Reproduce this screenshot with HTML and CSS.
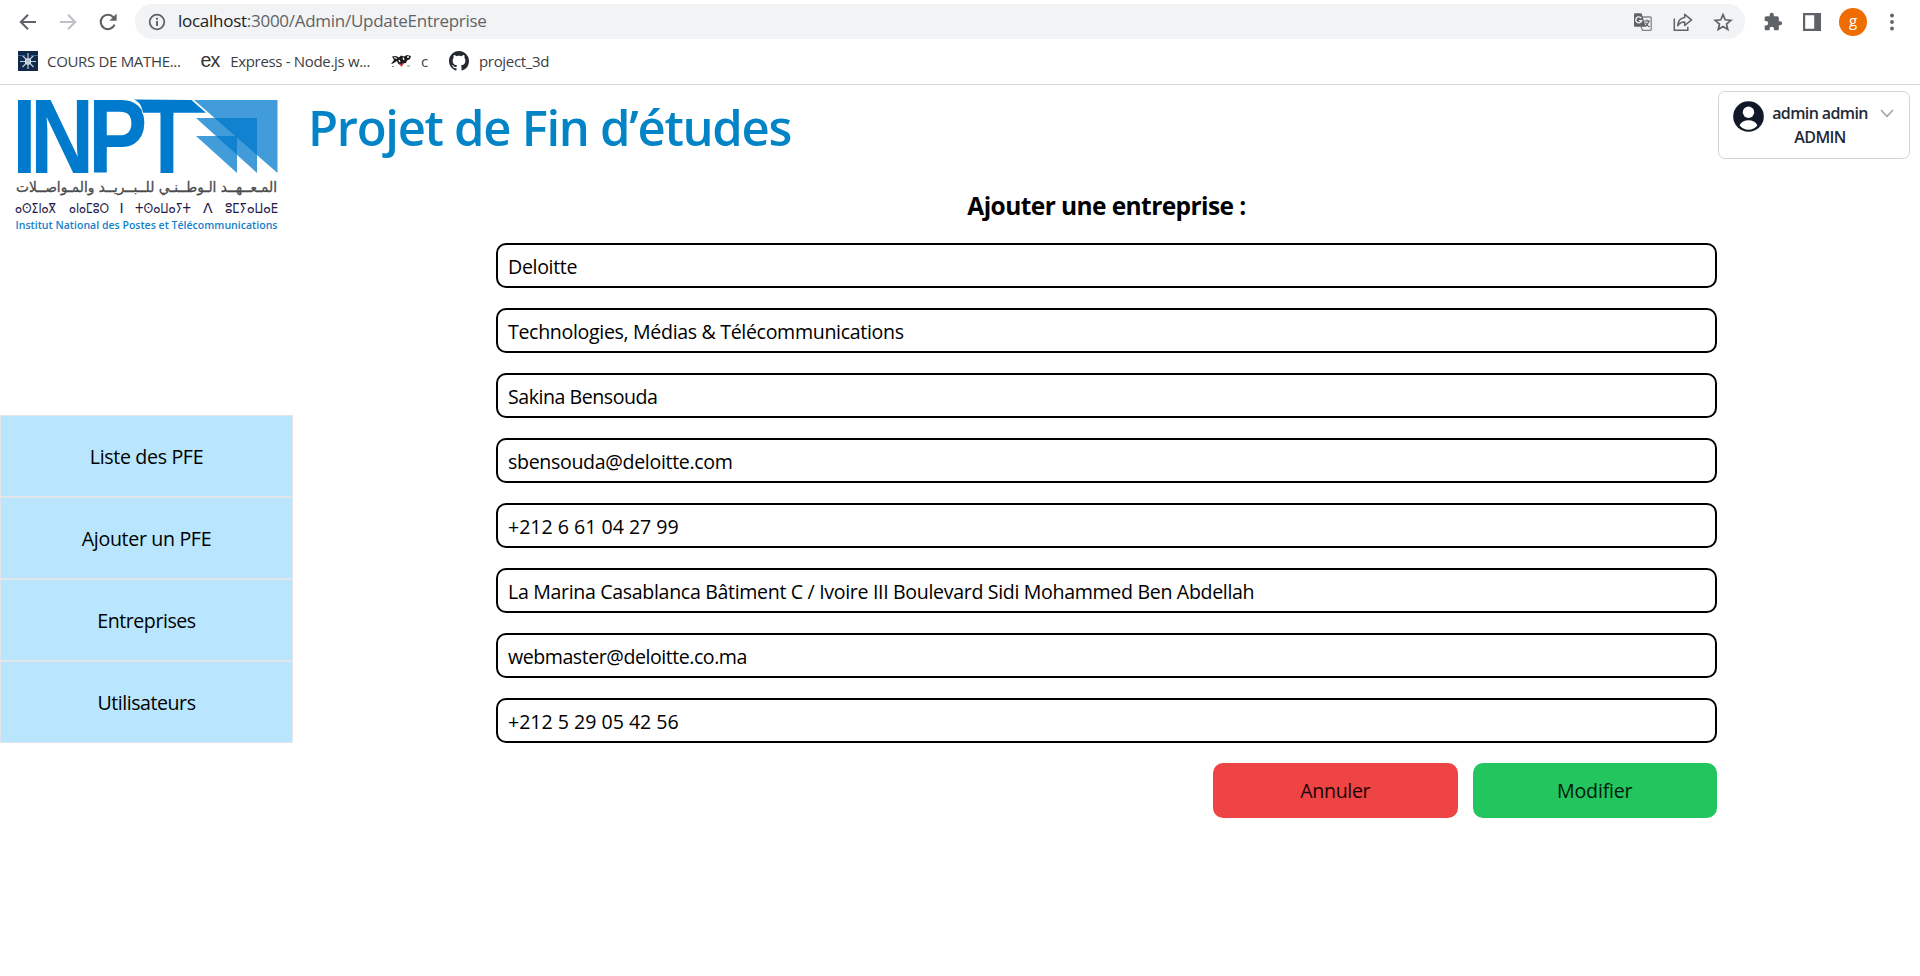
FILE: index.html
```html
<!DOCTYPE html>
<html lang="fr">
<head>
<meta charset="utf-8">
<title>Projet de Fin d’études</title>
<link rel="stylesheet" href="styles.css">
</head>
<body>
<header class="browser">
  <div class="toolbar">
    <svg class="tool back" width="20" height="20" viewBox="0 0 20 20"><path d="M18 10H3M10 2.7L2.800 10l7.200 7.300" fill="none" stroke="#5f6368" stroke-width="2"/></svg>
    <svg class="tool forward" width="20" height="20" viewBox="0 0 20 20"><path d="M2 10h15M10 2.700l7.200 7.300-7.200 7.300" fill="none" stroke="#bdc0c4" stroke-width="2"/></svg>
    <svg class="tool reload" width="20" height="20" viewBox="0 0 20 20"><path d="M16.600 12.600A7.200 7.200 0 1 1 15.400 5.200" fill="none" stroke="#5f6368" stroke-width="2.100"/><path d="M18.600 1.600v7.200h-7.200z" fill="#5f6368"/></svg>
    <div class="omnibox">
      <svg width="18" height="18" viewBox="0 0 18 18"><circle cx="9" cy="9" r="7.300" fill="none" stroke="#5f6368" stroke-width="1.800"/><path d="M9 8v5M9 4.800v2" stroke="#5f6368" stroke-width="2"/></svg>
      <span class="url"><span class="host">localhost</span>:3000/Admin/UpdateEntreprise</span>
      <div class="actions">
        <svg width="20" height="20" viewBox="0 0 20 20"><path d="M8 5h9.200q1 0 1 1v11.400q0 1-1 1H9.500L8 14.500" fill="none" stroke="#80848a" stroke-width="1.300"/><path d="M2.200 1.200h6.300l4.300 13.600H2.200q-1.200 0-1.200-1.200V2.400q0-1.200 1.200-1.200z" fill="#5f6368"/><path d="M8.300 6.200A3 3 0 1 0 8.700 8.600H6" fill="none" stroke="#f1f3f4" stroke-width="1.400"/><path d="M11 9h6M14 7.500V9M16 9q-1 3.500-4 5.500M12.500 10.500q1.500 3 4 4.500" fill="none" stroke="#5f6368" stroke-width="1.200"/></svg>
        <svg width="20" height="20" viewBox="0 0 20 20"><path d="M1.300 6.500v11.700h13.500v-3.500" fill="none" stroke="#5f6368" stroke-width="1.500"/><path d="M11.700 2.300l6.800 5.600-6.800 5.600v-3.400c-3.200 0-5.400 1.100-7 3.700.3-4.600 2.600-7.600 7-8.200z" fill="none" stroke="#5f6368" stroke-width="1.500" stroke-linejoin="round"/></svg>
        <svg width="20" height="20" viewBox="0 0 20 20"><path d="M10 2.600l2.200 5.200 5.600.5-4.300 3.700 1.300 5.500-4.800-2.900-4.800 2.900 1.300-5.500-4.300-3.700 5.600-.5z" fill="none" stroke="#5f6368" stroke-width="1.700"/></svg>
      </div>
    </div>
    <div class="extras">
      <svg width="20" height="20" viewBox="0 0 24 24"><path fill="#5f6368" d="M20.500 11H19V7c0-1.100-.9-2-2-2h-4V3.500a2.500 2.500 0 0 0-5 0V5H4c-1.100 0-2 .9-2 2v3.800h1.500a2.700 2.700 0 0 1 0 5.400H2V20c0 1.100.9 2 2 2h3.800v-1.500a2.700 2.700 0 0 1 5.400 0V22H17c1.100 0 2-.9 2-2v-4h1.500a2.500 2.500 0 0 0 0-5z"/></svg>
      <svg width="18" height="18" viewBox="0 0 18 18"><path fill="#5f6368" fill-rule="evenodd" d="M0 0h18v18H0zM2.200 2.200v13.600h9V2.200z"/></svg>
      <span class="account">g</span>
      <svg width="6" height="18" viewBox="0 0 6 18"><g fill="#5f6368"><circle cx="3" cy="2.500" r="1.900"/><circle cx="3" cy="9" r="1.900"/><circle cx="3" cy="15.500" r="1.900"/></g></svg>
    </div>
  </div>
  <nav class="bookmarks">
    <a class="bookmark"><svg width="20" height="20" viewBox="0 0 20 20"><path fill="#10294a" d="M0 0h20v20H0z"/><path d="M10 2v16M2 10.500h16M4.500 4.500l11 11.500M15.500 4.500l-11 11.500" stroke="#b9cbdc" stroke-width="1.200"/><circle cx="10" cy="10.500" r="2.600" fill="none" stroke="#dfe8f0" stroke-width="1.100"/><path d="M0 4.500h7M13 4.500h7" stroke="#3f6a92" stroke-width="1"/></svg><span>COURS DE MATHE...</span></a>
    <a class="bookmark express"><span class="ex">ex</span><span>Express - Node.js w...</span></a>
    <a class="bookmark cbook"><svg width="21" height="14" viewBox="0 0 21 14"><path d="M1 2.500l4-.5 3 1.500 2-2 3 1 3-1.500 4 1-1 3-3 1.500-1 2.500-3 .5-2 2-3-2-1-2.500-4 2.500-2 .5 3-4z" fill="#1b1b1b"/><path d="M3 3.500l3 1M12 3.500l1 2.500M16 3h2M8 6l1 2" stroke="#fff" stroke-width="1.300"/><path d="M8.500 9.500l2 2.500 2-3" stroke="#d64550" stroke-width="1.200" fill="none"/><path d="M1 12.500h2M16 12h3" stroke="#888"/></svg><span>c</span></a>
    <a class="bookmark github"><svg width="20" height="20" viewBox="0 0 16 16"><path fill="#24292f" d="M8 0C3.580 0 0 3.580 0 8c0 3.540 2.290 6.530 5.470 7.590.4.070.55-.17.55-.38 0-.19-.01-.82-.01-1.490-2.010.37-2.530-.49-2.690-.94-.09-.23-.48-.94-.82-1.130-.28-.15-.68-.52-.01-.53.63-.01 1.080.58 1.230.82.72 1.210 1.870.87 2.330.66.07-.52.28-.87.51-1.070-1.780-.2-3.640-.89-3.640-3.950 0-.87.31-1.590.82-2.150-.08-.2-.36-1.020.08-2.120 0 0 .67-.21 2.200.82.64-.18 1.320-.27 2-.27s1.360.09 2 .27c1.530-1.040 2.200-.82 2.200-.82.44 1.100.16 1.920.08 2.120.51.56.82 1.270.82 2.150 0 3.070-1.870 3.750-3.650 3.950.29.25.54.73.54 1.480 0 1.070-.01 1.930-.01 2.200 0 .21.15.46.55.38A8.010 8.010 0 0 0 16 8c0-4.420-3.580-8-8-8z"/></svg><span>project_3d</span></a>
  </nav>
</header>

<div class="page">
  <aside class="sidebar">
    <svg class="logo" width="293" height="155" viewBox="0 0 293 155">
      <text class="logo-name" x="14.300 35.700 104.800 166.400" y="88" transform="scale(.84 1)">INPT</text>
      <path d="M134 14.500C139.500 17 142 21 143 27.700H206L191.400 15z" fill="#007acc" stroke="#fff" stroke-width="1.600" paint-order="stroke"/>
      <path d="M160.600 26h12.800v4h-12.800z" fill="#007acc"/>
      <g fill="#007acc" fill-opacity=".74">
        <path d="M194 15h83.500v73z"/>
        <path d="M196 33h61v55z"/>
        <path d="M196 51h41v37z"/>
      </g>
      <text class="logo-arabic" x="146.500" y="107" textLength="261" lengthAdjust="spacingAndGlyphs">المـعــهــد الـوطــنـي للــبــريــد والمـواصــلات</text>
      <g class="logo-tifinagh">
        <text x="15" y="128" textLength="41" lengthAdjust="spacingAndGlyphs">ⴰⵙⵉⵏⴰⴳ</text>
        <text x="69" y="128" textLength="40" lengthAdjust="spacingAndGlyphs">ⴰⵏⴰⵎⵓⵔ</text>
        <text x="119.500" y="128">ⵏ</text>
        <text x="135" y="128" textLength="56" lengthAdjust="spacingAndGlyphs">ⵜⵙⴰⵡⴰⵢⵜ</text>
        <text x="203" y="128">ⴷ</text>
        <text x="225" y="128" textLength="53" lengthAdjust="spacingAndGlyphs">ⵓⵎⵢⴰⵡⴰⴹ</text>
      </g>
      <text class="logo-caption" x="15.500" y="144" textLength="262" lengthAdjust="spacingAndGlyphs">Institut National des Postes et Télécommunications</text>
    </svg>
    <nav class="menu">
      <a class="menu-item">Liste des PFE</a>
      <a class="menu-item">Ajouter un PFE</a>
      <a class="menu-item tight">Entreprises</a>
      <a class="menu-item tight">Utilisateurs</a>
    </nav>
  </aside>
  <main class="content">
    <div class="topbar">
      <h1 class="title">Projet de Fin d’études</h1>
      <div class="profile">
        <svg class="avatar" width="31" height="31" viewBox="0 0 31 31"><circle cx="15.500" cy="15.500" r="15.300" fill="#111827"/><circle cx="15.500" cy="11.300" r="5.700" fill="#fff"/><path d="M6.600 24.300c1.500-3.300 5-5 8.900-5s7.400 1.700 8.900 5c-2 2.900-5.200 4.500-8.900 4.500s-6.900-1.600-8.900-4.500z" fill="#fff"/></svg>
        <div class="identity"><span>admin admin</span><span class="role">ADMIN</span></div>
        <svg class="chevron" width="14" height="9" viewBox="0 0 14 9"><path d="M1 1l6 6.300L13 1" fill="none" stroke="#9ca3af" stroke-width="1.500"/></svg>
      </div>
    </div>
    <form class="form">
      <h2 class="form-title">Ajouter une entreprise :</h2>
      <div class="field">Deloitte</div>
      <div class="field">Technologies, Médias &amp; Télécommunications</div>
      <div class="field tight">Sakina Bensouda</div>
      <div class="field">sbensouda@deloitte.com</div>
      <div class="field phone">+212 6 61 04 27 99</div>
      <div class="field">La Marina Casablanca Bâtiment C / Ivoire III Boulevard Sidi Mohammed Ben Abdellah</div>
      <div class="field tight">webmaster@deloitte.co.ma</div>
      <div class="field phone">+212 5 29 05 42 56</div>
      <div class="buttons">
        <div class="button cancel">Annuler</div>
        <div class="button submit">Modifier</div>
      </div>
    </form>
  </main>
</div>
</body>
</html>
```

FILE: styles.css
```css
* { box-sizing: border-box; }
body {
  margin: 0;
  background: #fff;
  color: #000;
  font: 19.6px/30px "Open Sans", "Noto Sans", sans-serif;
  letter-spacing: -.34px;
}
svg { display: block; flex: none; overflow: visible; }

.browser { height: 85px; border-bottom: 1px solid #d5d7da; }
.toolbar { display: flex; align-items: center; height: 39px; padding: 4px 0 0 18px; }
.tool { margin-right: 20px; }
.reload { margin-right: 17px; }
.omnibox {
  display: flex;
  align-items: center;
  width: 1610px;
  height: 35px;
  padding: 0 12px 0 13px;
  border-radius: 18px;
  background: #f1f3f4;
}
.url { margin: -1px 0 0 12px; font-size: 17px; letter-spacing: -.27px; color: #5f6368; }
.host { color: #202124; }
.actions { display: flex; gap: 20px; margin-left: auto; }
.extras { display: flex; align-items: center; margin-left: 18px; }
.extras svg:nth-child(2) { margin-left: 20px; }
.account {
  width: 28px;
  height: 28px;
  margin: 0 22px 0 18px;
  border-radius: 50%;
  background: #ef6c00;
  color: #fff;
  font-size: 15px;
  line-height: 25px;
  text-align: center;
}
.bookmarks { display: flex; align-items: center; height: 46px; padding: 0 0 2px 18px; }
.bookmark { display: flex; align-items: center; gap: 9px; font-size: 15px; line-height: 28px; letter-spacing: -.32px; color: #3c4043; }
.bookmark span { margin-top: -1px; }
.express { margin-left: 20px; gap: 11px; }
.bookmark .ex { margin-top: -3px; font: 19.5px/20px "Liberation Sans", Arial, sans-serif; letter-spacing: -1px; color: #333; }
.cbook { margin-left: 21px; }
.github { margin-left: 21px; gap: 10px; }

.page { display: flex; height: 891px; }
.sidebar { width: 293px; }
.menu { margin-top: 175px; border: 1px solid #e2e6ea; }
.menu-item {
  display: flex;
  align-items: center;
  justify-content: center;
  height: 82px;
  padding-top: 2px;
  border-bottom: 2px solid #e2e6ea;
  background: #bae6fd;
}
.menu-item:last-child { height: 80px; border-bottom: 0; }

.logo-name { font: bold 106px "Liberation Sans", Arial, sans-serif; letter-spacing: 0; fill: #007acc; }
.logo-arabic { font: 14px "DejaVu Sans", sans-serif; letter-spacing: 0; direction: rtl; text-anchor: middle; fill: #4a4a4c; stroke: #4a4a4c; stroke-width: .3px; }
.logo-tifinagh { font: 14px "DejaVu Sans", sans-serif; letter-spacing: 0; fill: #1d1b4c; }
.logo-caption { font: 600 9.8px "Open Sans", sans-serif; letter-spacing: 0; fill: #1580c8; }

.content { flex: 1; }
.topbar { display: flex; justify-content: space-between; padding: 6px 10px 0 15px; height: 96px; }
.title { margin: 6px 0 0; font-size: 49px; font-weight: 600; line-height: 60px; letter-spacing: -1.3px; color: #0284c7; }
.profile {
  display: flex;
  width: 192px;
  height: 68px;
  padding: 9px 15px 0 14px;
  border: 1px solid #d1d5db;
  border-radius: 7px;
}
.identity {
  display: flex;
  flex-direction: column;
  align-items: center;
  width: 96px;
  margin-left: 8px;
  font-size: 16px;
  font-weight: 600;
  line-height: 24px;
  letter-spacing: -.62px;
  white-space: nowrap;
  color: #1f2937;
}
.chevron { margin: 8px 0 0 12px; }

.form { display: flex; flex-direction: column; width: 1221px; margin-left: 203px; gap: 20px; }
.form-title { margin: 0; height: 42px; font-size: 24.5px; font-weight: 700; line-height: 49px; letter-spacing: -.58px; text-align: center; }
.field {
  height: 45px;
  padding: 7px 10px;
  border: 2px solid #000;
  border-radius: 10px;
  line-height: 29px;
}
.tight { letter-spacing: -.47px; }
.phone { letter-spacing: -.02px; }
.buttons { display: flex; justify-content: flex-end; gap: 15px; }
.button { width: 244.500px; height: 55px; border-radius: 10px; line-height: 55px; text-align: center; }
.cancel { background: #ef4444; color: #1a0505; }
.submit { background: #22c55e; color: #04190b; letter-spacing: -.2px; }
```
